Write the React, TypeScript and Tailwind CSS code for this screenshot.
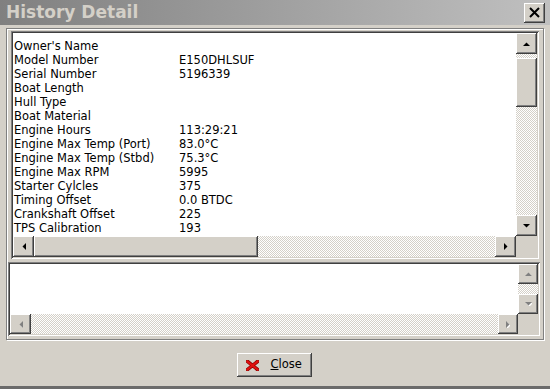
import React from 'react';

const raised =
    'bg-[#d4d0c8] shadow-[inset_-1px_-1px_#404040,inset_1px_1px_#ffffff,inset_-2px_-2px_#808080,inset_2px_2px_#d4d0c8]';
const sunken =
    'shadow-[inset_1px_1px_#808080,inset_-1px_-1px_#ffffff,inset_2px_2px_#404040,inset_-2px_-2px_#d4d0c8]';
const track =
    'bg-[repeating-conic-gradient(#d4d0c8_0_25%,#ffffff_0_50%)] bg-[length:2px_2px]';

const rows: [string, string][] = [
    ["Owner's Name", ''],
    ['Model Number', 'E150DHLSUF'],
    ['Serial Number', '5196339'],
    ['Boat Length', ''],
    ['Hull Type', ''],
    ['Boat Material', ''],
    ['Engine Hours', '113:29:21'],
    ['Engine Max Temp (Port)', '83.0°C'],
    ['Engine Max Temp (Stbd)', '75.3°C'],
    ['Engine Max RPM', '5995'],
    ['Starter Cylcles', '375'],
    ['Timing Offset', '0.0 BTDC'],
    ['Crankshaft Offset', '225'],
    ['TPS Calibration', '193'],
];

type Dir = 'up' | 'down' | 'left' | 'right';

function Arrow({ dir, off }: { dir: Dir; off?: boolean }) {
    const pts: { [k in Dir]: string } = {
        up: '0,4 7,4 3.5,0.5',
        down: '0,0 7,0 3.5,3.5',
        left: '4,0 4,7 0.5,3.5',
        right: '0,0 0,7 3.5,3.5',
    };
    const vert = dir === 'up' || dir === 'down';
    const w = vert ? 7 : 4;
    const h = vert ? 4 : 7;
    return (
        <svg width={w} height={h} viewBox={`0 0 ${w} ${h}`} className="block">
            {off && (
                <polygon points={pts[dir]} fill="#ffffff" transform="translate(1,1)" />
            )}
            <polygon points={pts[dir]} fill={off ? '#808080' : '#000000'} />
        </svg>
    );
}

function ScrollBtn({ dir, off, size }: { dir: Dir; off?: boolean; size: string }) {
    return (
        <div className={`${raised} ${size} shrink-0 flex items-center justify-center`}>
            <Arrow dir={dir} off={off} />
        </div>
    );
}

export default function App() {
    return (
        <div className="w-[550px] h-[389px] bg-[#d4d0c8] flex flex-col border-b-[3px] border-[#6b6b6b] font-['DejaVu_Sans',sans-serif] text-[11.5px] text-black overflow-hidden">
            {/* Title bar */}
            <div className="h-[25px] shrink-0 flex items-center justify-between pl-[6px] pr-[5px] bg-gradient-to-r from-[#808080] to-[#c0c0c0]">
                <span className="text-[17px] font-bold text-[#d4d0c8] leading-none">History Detail</span>
                <div className={`${raised} w-[21px] h-[20px] flex items-center justify-center`}>
                    <svg width="11" height="11" viewBox="0 0 11 11">
                        <path d="M1 1 L10 10 M10 1 L1 10" stroke="#000" strokeWidth="2" />
                    </svg>
                </div>
            </div>

            {/* Body */}
            <div className="flex-1 flex flex-col px-[6px] pt-[3px]">
                <div className="h-[312px] border border-[#808080] shadow-[inset_1px_1px_#ffffff,1px_1px_#ffffff] flex flex-col px-[1px]">
                    {/* Upper list */}
                    <div className={`${sunken} bg-white mt-[2px] ml-[3px] w-[528px] h-[228px] p-[2px] flex flex-col`}>
                        <div className="flex flex-1 min-h-0">
                            <div className="flex-1 pt-[6px] pl-[1px] leading-[14px] overflow-hidden">
                                {rows.map(([k, v]) => (
                                    <div key={k} className="flex h-[14px] whitespace-nowrap">
                                        <span className="w-[165px]">{k}</span>
                                        <span>{v}</span>
                                    </div>
                                ))}
                            </div>
                            <div className={`w-[21px] flex flex-col ${track}`}>
                                <ScrollBtn dir="up" size="w-[21px] h-[21px]" />
                                <div className={`${raised} mt-[4px] w-[21px] h-[49px]`} />
                                <div className="flex-1" />
                                <ScrollBtn dir="down" size="w-[21px] h-[21px]" />
                            </div>
                        </div>
                        <div className={`flex h-[21px] ${track}`}>
                            <ScrollBtn dir="left" size="w-[21px] h-[21px]" />
                            <div className={`${raised} w-[224px] h-[21px]`} />
                            <div className="flex-1" />
                            <ScrollBtn dir="right" size="w-[21px] h-[21px]" />
                            <div className="w-[21px] h-[21px] bg-[#d4d0c8]" />
                        </div>
                    </div>

                    {/* Lower text box */}
                    <div className={`${sunken} bg-white mt-[3px] w-[532px] h-[74px] p-[2px] flex flex-col`}>
                        <div className="flex flex-1 min-h-0">
                            <div className="flex-1" />
                            <div className={`w-[20px] flex flex-col ${track}`}>
                                <ScrollBtn dir="up" off size="w-[20px] h-[20px]" />
                                <div className="flex-1" />
                                <ScrollBtn dir="down" off size="w-[20px] h-[20px]" />
                            </div>
                        </div>
                        <div className={`flex h-[20px] ${track}`}>
                            <ScrollBtn dir="left" off size="w-[21px] h-[20px]" />
                            <div className="flex-1" />
                            <ScrollBtn dir="right" off size="w-[20px] h-[20px]" />
                            <div className="w-[20px] h-[20px] bg-[#d4d0c8]" />
                        </div>
                    </div>
                </div>

                {/* Footer */}
                <div className="flex justify-center pt-[13px]">
                    <button className="w-[75px] h-[24px] bg-[#d4d0c8] shadow-[inset_-1px_-1px_#404040,inset_1px_1px_#ffffff,inset_-2px_-2px_#808080] flex items-center pl-[9px] gap-[12px] ml-[-2px]">
                        <svg width="13" height="11" viewBox="0 0 13 11">
                            <path d="M1.5 1.5 L11.5 9.5 M11.5 1.5 L1.5 9.5" stroke="#8a0000" strokeWidth="3.6" strokeLinecap="square" />
                            <path d="M1.5 1.5 L11.5 9.5 M11.5 1.5 L1.5 9.5" stroke="#e01010" strokeWidth="2.2" strokeLinecap="square" />
                        </svg>
                        <span>
                            <span className="underline">C</span>lose
                        </span>
                    </button>
                </div>
            </div>
        </div>
    );
}
